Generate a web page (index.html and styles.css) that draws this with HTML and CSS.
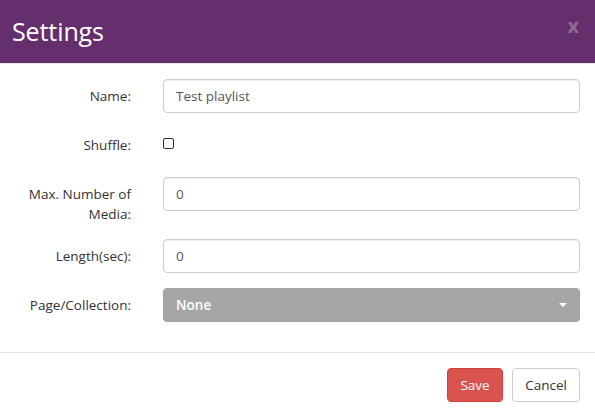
FILE: index.html
```
<!DOCTYPE html>
<html>
<head>
<meta charset="utf-8">
<link rel="stylesheet" href="styles.css">
</head>
<body>
<div class="modal">
  <div class="modal-header">
    <h4 class="modal-title">Settings</h4>
    <span class="close">x</span>
  </div>
  <div class="modal-body">
    <form class="form">
      <div class="form-group">
        <label class="control-label">Name:</label>
        <div class="field"><input class="form-control" type="text" value="Test playlist"></div>
      </div>
      <div class="form-group">
        <label class="control-label">Shuffle:</label>
        <div class="field check"><input class="checkbox" type="checkbox"></div>
      </div>
      <div class="form-group">
        <label class="control-label">Max. Number of Media:</label>
        <div class="field"><input class="form-control" type="text" value="0"></div>
      </div>
      <div class="form-group">
        <label class="control-label">Length(sec):</label>
        <div class="field"><input class="form-control" type="text" value="0"></div>
      </div>
      <div class="form-group">
        <label class="control-label">Page/Collection:</label>
        <div class="field"><div class="select"><span>None</span><span class="caret"></span></div></div>
      </div>
    </form>
  </div>
  <div class="modal-footer">
    <button class="btn btn-danger" type="button">Save</button>
    <button class="btn btn-default" type="button">Cancel</button>
  </div>
</div>
</body>
</html>
```
FILE: styles.css
```
* { box-sizing: border-box; }
html, body { margin: 0; padding: 0; background: #fff; }
body {
  font-family: "Open Sans", "Noto Sans", sans-serif;
  font-size: 13.5px;
  line-height: 20px;
  color: #333;
  width: 595px;
  height: 417px;
  overflow: hidden;
}
.modal { width: 595px; }
.modal-header {
  background: #652f6d;
  height: 64px;
  border-bottom: 1px solid #e5e5e5;
  display: flex;
  align-items: center;
  justify-content: space-between;
  padding: 0 16px 2px 12px;
}
.modal-title {
  margin: 0;
  color: #fff;
  font-size: 25px;
  font-weight: 400;
  line-height: 30px;
  letter-spacing: -0.1px;
}
.close {
  color: rgba(255,255,255,0.28);
  font-weight: 700;
  font-size: 20px;
  line-height: 20px;
  margin-top: -10px;
}
.modal-body { padding: 15px 15px 0 15px; }
.form { display: flex; flex-direction: column; gap: 15px; }
.form-group {
  display: grid;
  grid-template-columns: 116px 1fr;
  column-gap: 32px;
}
.control-label {
  text-align: right;
  padding-top: 7px;
  padding-left: 10px;
}
.form-control {
  width: 100%;
  height: 34px;
  border: 1px solid #ccc;
  border-radius: 4px;
  padding: 6px 12px;
  font-family: inherit;
  font-size: 13.5px;
  color: #555;
  background: #fff;
  box-shadow: inset 0 1px 1px rgba(0,0,0,0.075);
}
.check { height: 34px; padding-top: 10px; }
.checkbox {
  appearance: none;
  -webkit-appearance: none;
  display: block;
  width: 11px;
  height: 11px;
  margin: 0;
  border: 1px solid #333;
  border-radius: 2px;
  background: #fff;
}
.select {
  height: 34px;
  border: 1px solid #a0a0a0;
  border-radius: 4px;
  background: #a6a6a6;
  color: #fff;
  padding: 6px 12px;
  display: flex;
  align-items: center;
  justify-content: space-between;
  font-weight: 600;
}
.caret {
  width: 0; height: 0;
  border-left: 4px solid transparent;
  border-right: 4px solid transparent;
  border-top: 4px solid #fff;
}
.modal-footer {
  margin-top: 30px;
  border-top: 1px solid #e5e5e5;
  padding: 15px 15px;
  display: flex;
  justify-content: flex-end;
  gap: 9px;
}
.btn {
  height: 34px;
  border-radius: 4px;
  font-family: inherit;
  font-size: 13.5px;
  padding: 6px 12px;
  border: 1px solid;
}
.btn-danger { background: #d9534f; border-color: #d43f3a; color: #fff; width: 56px; }
.btn-default { background: #fff; border-color: #ccc; color: #333; width: 68px; }
```
